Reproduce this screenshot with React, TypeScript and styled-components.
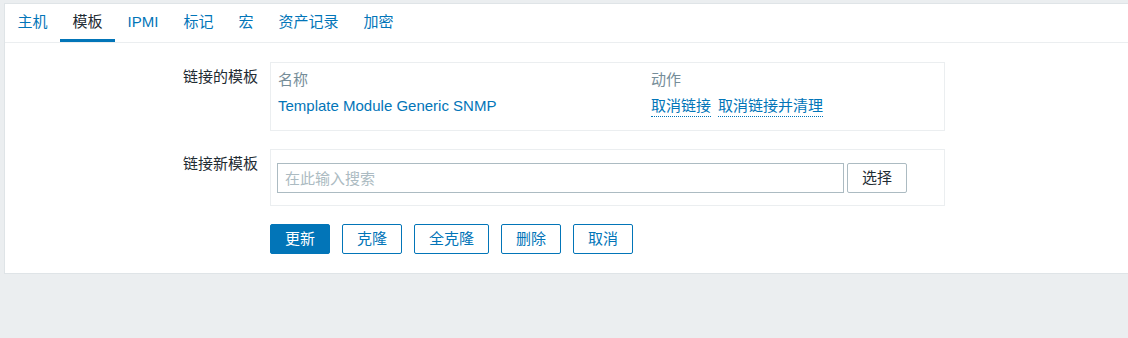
import styled, { createGlobalStyle } from 'styled-components';

const GlobalStyle = createGlobalStyle`
  html, body {
    margin: 0;
    padding: 0;
    background: #ebeef0;
    font-family: "Liberation Sans", "Noto Sans CJK SC", sans-serif;
    font-size: 15px;
    color: #1f2c33;
  }
  * {
    box-sizing: border-box;
  }
`;

const Page = styled.div`
  min-height: 100vh;
  padding: 3px 0 0 4px;
`;

const Panel = styled.div`
  background: #ffffff;
  border: 1px solid #dfe4e7;
  border-right: none;
`;

const TabBar = styled.div`
  display: flex;
  height: 39px;
  border-bottom: 1px solid #ebeef0;
`;

const Tab = styled.a<{ active?: boolean }>`
  display: block;
  height: 38px;
  padding: 0 12.5px;
  line-height: 36px;
  color: ${(props) => (props.active ? '#1f2c33' : '#0275b8')};
  border-bottom: 3px solid ${(props) => (props.active ? '#0275b8' : 'transparent')};
  cursor: pointer;
  white-space: nowrap;
`;

const Form = styled.div`
  display: grid;
  grid-template-columns: 253px 675px;
  column-gap: 12px;
  row-gap: 18px;
  padding: 19px 0 19px;
`;

const Label = styled.div`
  text-align: right;
  line-height: 20px;
  padding-top: 5px;
  white-space: nowrap;
`;

const Box = styled.div`
  border: 1px solid #ebeef0;
`;

const LinkedBox = styled(Box)`
  padding: 7px 7px 13px;
`;

const TableRow = styled.div`
  display: grid;
  grid-template-columns: 373px 1fr;
  line-height: 20px;
  & + & {
    margin-top: 6px;
  }
`;

const HeaderCell = styled.div`
  color: #768d99;
`;

const NameLink = styled.a`
  color: #0275b8;
  cursor: pointer;
`;

const Actions = styled.div`
  display: flex;
  gap: 7px;
`;

const ActionLink = styled.a`
  display: inline-block;
  color: #0275b8;
  line-height: 20px;
  border-bottom: 1px dotted #0275b8;
  cursor: pointer;
`;

const SearchBox = styled(Box)`
  display: flex;
  gap: 3px;
  padding: 13px 7px 12px 6px;
`;

const SearchInput = styled.input`
  width: 567px;
  height: 30px;
  border: 1px solid #acbbc2;
  padding: 0 7px;
  font: inherit;
  color: #1f2c33;
  outline: none;
  &::placeholder {
    color: #acbbc2;
  }
`;

const Button = styled.button<{ variant?: 'primary' | 'outline' | 'grey' }>`
  height: 30px;
  padding: 0 14px;
  font: inherit;
  line-height: 28px;
  border-radius: 2px;
  cursor: pointer;
  white-space: nowrap;
  border: 1px solid
    ${(props) => (props.variant === 'grey' ? '#acbbc2' : '#0275b8')};
  background: ${(props) => (props.variant === 'primary' ? '#0275b8' : '#ffffff')};
  color: ${(props) =>
    props.variant === 'primary'
      ? '#ffffff'
      : props.variant === 'grey'
        ? '#1f2c33'
        : '#0275b8'};
`;

const ButtonRow = styled.div`
  grid-column: 2;
  display: flex;
  gap: 12px;
`;

const tabs = ['主机', '模板', 'IPMI', '标记', '宏', '资产记录', '加密'];

export default function App() {
  return (
    <>
      <GlobalStyle />
      <Page>
        <Panel>
          <TabBar>
            {tabs.map((tab) => (
              <Tab key={tab} active={tab === '模板'}>
                {tab}
              </Tab>
            ))}
          </TabBar>
          <Form>
            <Label>链接的模板</Label>
            <LinkedBox>
              <TableRow>
                <HeaderCell>名称</HeaderCell>
                <HeaderCell>动作</HeaderCell>
              </TableRow>
              <TableRow>
                <div>
                  <NameLink>Template Module Generic SNMP</NameLink>
                </div>
                <Actions>
                  <ActionLink>取消链接</ActionLink>
                  <ActionLink>取消链接并清理</ActionLink>
                </Actions>
              </TableRow>
            </LinkedBox>

            <Label>链接新模板</Label>
            <SearchBox>
              <SearchInput placeholder="在此输入搜索" />
              <Button variant="grey">选择</Button>
            </SearchBox>

            <ButtonRow>
              <Button variant="primary">更新</Button>
              <Button variant="outline">克隆</Button>
              <Button variant="outline">全克隆</Button>
              <Button variant="outline">删除</Button>
              <Button variant="outline">取消</Button>
            </ButtonRow>
          </Form>
        </Panel>
      </Page>
    </>
  );
}
